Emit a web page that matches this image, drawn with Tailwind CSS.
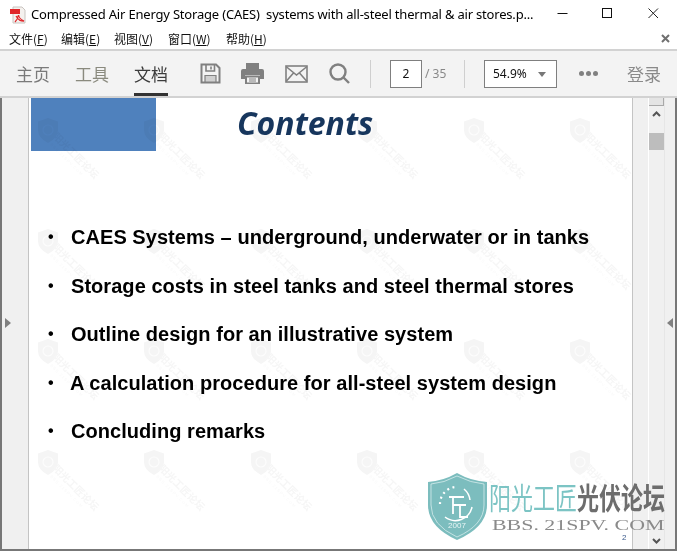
<!DOCTYPE html>
<html lang="zh">
<head>
  <meta charset="UTF-8" />
  <title>Compressed Air Energy Storage</title>
  <script src="https://cdn.jsdelivr.net/npm/@tailwindcss/browser@4"></script>
</head>
<body class="relative w-[677px] h-[551px] overflow-hidden bg-white font-['Noto_Sans_CJK_SC',sans-serif] text-black">
  <svg width="0" height="0" class="absolute">
    <defs>
      <g id="wm">
        <path d="M10 0 L20 3.500 V12 Q20 20 10 25 Q0 20 0 12 V3.500 Z" fill="#f5f5f5"/>
        <circle cx="10" cy="12" r="5" fill="none" stroke="#fcfcfc" stroke-width="1.200"/>
        <g transform="translate(19 14) rotate(45)">
          <text x="0" y="7" font-size="10" font-weight="700" fill="#f6f6f6" font-family="Noto Sans CJK SC">阳光工匠论坛</text>
          <text x="4" y="14" font-size="4" fill="#f8f8f8" font-family="Liberation Sans" letter-spacing="1">BBS.21SPV.COM</text>
        </g>
      </g>
    </defs>
  </svg>

  <!-- title bar -->
  <div class="flex items-center h-[29px] pl-[10px]">
    <svg width="16" height="18" viewBox="0 0 16 18" class="shrink-0">
      <path d="M3 1H12L15 4V17H3Z" fill="#f4f1ee" stroke="#c9c4c0"/>
      <rect x="0" y="3" width="10" height="5" fill="#e0262a"/>
      <path d="M6 10 C9 15 11 15 14 15 C10 13 9 12 8.500 9 C8 12 7 14 5 16" fill="none" stroke="#e0262a" stroke-width="1.300"/>
    </svg>
    <span class="ml-[5px] w-[510px] whitespace-pre text-[13px] tracking-[-0.19px] font-['Noto_Sans','Open_Sans',sans-serif] leading-none">Compressed Air Energy Storage (CAES)  systems with all-steel thermal &amp; air stores.p...</span>
    <svg width="11" height="11" viewBox="0 0 11 11" class="absolute left-[557px] top-[8px]"><path d="M0.500 5.500H10.500" stroke="#111"/></svg>
    <svg width="11" height="11" viewBox="0 0 11 11" class="absolute left-[602px] top-[8px]"><rect x="0.500" y="0.500" width="9" height="9" fill="none" stroke="#111"/></svg>
    <svg width="11" height="11" viewBox="0 0 11 11" class="absolute left-[648px] top-[8px]"><path d="M0.500 0.500L10 10M10 0.500L0.500 10" stroke="#222"/></svg>
  </div>

  <!-- menu bar -->
  <div class="relative flex items-center h-[20px] pl-[9px] text-[12px] leading-none text-[#111]">
    <span class="w-[52px]">文件(<u>F</u>)</span>
    <span class="w-[53px]">编辑(<u>E</u>)</span>
    <span class="w-[54px]">视图(<u>V</u>)</span>
    <span class="w-[58px]">窗口(<u>W</u>)</span>
    <span>帮助(<u>H</u>)</span>
    <svg width="9" height="9" viewBox="0 0 9 9" class="absolute right-[7px] top-[5px]"><path d="M1 1L8 8M8 1L1 8" stroke="#707070" stroke-width="2"/></svg>
  </div>

  <!-- toolbar -->
  <div class="flex items-center h-[45px] bg-[#f3f3f3] border-y-2 border-[#d2d2d2] box-content text-[#7a7a7a]">
    <div class="flex h-full items-center pl-[16px] text-[17px] leading-none">
      <span class="w-[59px]">主页</span>
      <span class="w-[59px] text-[#8a8a7e]">工具</span>
      <span class="relative flex h-full items-center w-[34px] text-[#3c3c3c]">文档
        <span class="absolute left-0 right-0 bottom-0 h-[3px] bg-[#333]"></span>
      </span>
    </div>
    <svg width="21" height="21" viewBox="0 0 21 21" class="ml-[32px]" fill="none" stroke="#808080" stroke-width="2"><path d="M1.500 1.500H16L19.500 5V19.500H1.500Z"/><path d="M6 2V8H14.500V2M11 3.500V6.500" stroke-width="1.600"/><path d="M5 12.500H16V19H5Z" fill="#d0d0d0" stroke-width="1.200"/></svg>
    <svg width="23" height="21" viewBox="0 0 23 21" class="ml-[20px]"><path d="M5 0H18V6H5Z" fill="#808080"/><path d="M2 6H21Q23 6 23 8V16H19V12H4V16H0V8Q0 6 2 6Z" fill="#808080"/><path d="M5 13.500H18V20.500H5Z" fill="#f3f3f3" stroke="#808080" stroke-width="2"/><path d="M8 16H15M8 18H15" stroke="#808080"/></svg>
    <svg width="23" height="18" viewBox="0 0 23 18" class="ml-[21px]" fill="none" stroke="#808080" stroke-width="1.600"><rect x="1" y="1" width="21" height="16"/><path d="M1 1.500L11.500 10L22 1.500M1 16.500L8.500 8M22 16.500L14.500 8"/></svg>
    <svg width="21" height="21" viewBox="0 0 21 21" class="ml-[21px]" fill="none" stroke="#808080" stroke-width="2.400"><circle cx="9" cy="9" r="7.500"/><path d="M14.500 14.500L20 20"/></svg>
    <div class="ml-[20px] w-px h-[28px] bg-[#cfcfcf]"></div>
    <div class="ml-[19px] flex items-center justify-center w-[32px] h-[28px] bg-white border border-[#7f7f7f] text-[12px] text-[#111] font-['Noto_Sans',sans-serif]">2</div>
    <span class="ml-[3px] w-[21px] text-[12px] whitespace-nowrap text-[#888] font-['Noto_Sans',sans-serif]">/ 35</span>
    <div class="ml-[18px] w-px h-[28px] bg-[#cfcfcf]"></div>
    <div class="ml-[19px] relative flex items-center pl-[8px] w-[73px] h-[28px] bg-white border border-[#7f7f7f] text-[12px] text-[#111] font-['Noto_Sans',sans-serif]">54.9%
      <span class="absolute right-[10px] top-[11px] w-0 h-0 border-x-[4px] border-x-transparent border-t-[5px] border-t-[#777]"></span>
    </div>
    <div class="ml-[22px] flex gap-[2px]">
      <span class="size-[5px] rounded-full bg-[#808080]"></span>
      <span class="size-[5px] rounded-full bg-[#808080]"></span>
      <span class="size-[5px] rounded-full bg-[#808080]"></span>
    </div>
    <span class="ml-[29px] text-[17px] leading-none text-[#8a8a8a]">登录</span>
  </div>

  <!-- document area -->
  <div class="flex h-[453px] border-b-2 border-[#777]">
    <div class="relative w-[29px] shrink-0 bg-[#f0f0f0] border-l-2 border-[#777] border-r border-r-[#c4c4c4]">
      <span class="absolute left-[3px] top-[220px] w-0 h-0 border-y-[5px] border-y-transparent border-l-[6px] border-l-[#808080]"></span>
    </div>
    <div class="relative flex-1 bg-white overflow-hidden">
      <div class="absolute left-[2px] top-0 w-[125px] h-[53px] bg-[#4f81bd]"></div>
      <svg class="absolute inset-0 mix-blend-multiply" width="603" height="451">
        <use href="#wm" x="9" y="20"/><use href="#wm" x="115" y="20"/><use href="#wm" x="222" y="20"/><use href="#wm" x="328" y="20"/><use href="#wm" x="435" y="20"/><use href="#wm" x="541" y="20"/>
        <use href="#wm" x="9" y="131"/><use href="#wm" x="115" y="131"/><use href="#wm" x="222" y="131"/><use href="#wm" x="328" y="131"/><use href="#wm" x="435" y="131"/><use href="#wm" x="541" y="131"/>
        <use href="#wm" x="9" y="241"/><use href="#wm" x="115" y="241"/><use href="#wm" x="222" y="241"/><use href="#wm" x="328" y="241"/><use href="#wm" x="435" y="241"/><use href="#wm" x="541" y="241"/>
        <use href="#wm" x="9" y="352"/><use href="#wm" x="115" y="352"/><use href="#wm" x="222" y="352"/><use href="#wm" x="328" y="352"/><use href="#wm" x="435" y="352"/><use href="#wm" x="541" y="352"/>
      </svg>
      <div class="relative pt-[5px] pl-[208px] text-[32px] leading-[40px] font-bold italic text-[#17365d] font-['Open_Sans',sans-serif]">Contents</div>
      <ul class="relative mt-[82px] pl-[17px] text-[20px] tracking-[0.05px] leading-[24px] font-bold text-black font-['Liberation_Sans',sans-serif]">
        <li class="flex h-[48.500px]"><span class="w-[25px] pl-[2px] text-[16px]">•</span>CAES Systems – underground, underwater or in tanks</li>
        <li class="flex h-[48.500px]"><span class="w-[25px] pl-[2px] text-[16px]">•</span>Storage costs in steel tanks and steel thermal stores</li>
        <li class="flex h-[48.500px]"><span class="w-[25px] pl-[2px] text-[16px]">•</span>Outline design for an illustrative system</li>
        <li class="flex h-[48.500px]"><span class="w-[24px] pl-[2px] text-[16px]">•</span>A calculation procedure for all-steel system design</li>
        <li class="flex h-[48.500px]"><span class="w-[25px] pl-[2px] text-[16px]">•</span>Concluding remarks</li>
      </ul>
      <span class="absolute left-[593px] top-[436px] text-[8px] leading-none text-[#3b5a8c] font-['Liberation_Sans',sans-serif]">2</span>
    </div>
    <!-- right rail -->
    <div class="relative w-[45px] shrink-0 bg-[#f0f0f0] border-l border-[#c4c4c4] border-r-2 border-r-[#777]">
      <div class="absolute left-[15px] top-0 w-[17px] h-full bg-[#f0f0f0] border-l border-l-white border-r border-r-[#e6e6e6]">
        <div class="h-[8px] bg-[#e4e4e4] border-b border-r border-[#a9a9a9]"></div>
        <svg width="9" height="6" viewBox="0 0 9 6" class="absolute left-[3px] top-[13px]"><path d="M1 5L4.500 1.500L8 5" fill="none" stroke="#555" stroke-width="2"/></svg>
        <div class="absolute left-0 top-[35px] w-[15px] h-[17px] bg-[#bdbdbd]"></div>
        <svg width="9" height="6" viewBox="0 0 9 6" class="absolute left-[3px] top-[440px]"><path d="M1 1L4.500 4.500L8 1" fill="none" stroke="#555" stroke-width="2"/></svg>
      </div>
      <span class="absolute left-[34px] top-[220px] w-0 h-0 border-y-[5px] border-y-transparent border-r-[6px] border-r-[#808080]"></span>
    </div>
  </div>

  <!-- forum logo stamped over the window -->
  <div class="absolute left-[428px] top-[473px] flex">
    <svg width="60" height="68" viewBox="0 0 60 68">
      <path d="M29 0 Q43 8 59 9 V32 Q59 54 29 67 Q0 54 0 32 V9 Q15 8 29 0Z" fill="#7cbdbe"/>
      <path d="M29 3 Q43 10 56 11 V32 Q56 52 29 64 Q3 52 3 32 V11 Q16 10 29 3Z" fill="none" stroke="#d5ecec" stroke-width="0.800"/>
      <path d="M12 31A17 17 0 0 1 27 14" fill="none" stroke="#fff" stroke-width="2.200" stroke-dasharray="2 3.500"/>
      <path d="M36 16A17 17 0 0 1 42 27M44 34A17 17 0 0 1 17 44" fill="none" stroke="#fff" stroke-width="1.500"/>
      <path d="M21 24H36M25 24V41M25 32H38M32 32V44H40" fill="none" stroke="#fff" stroke-width="1.800"/>
      <text x="29" y="55" text-anchor="middle" font-size="8" fill="#e8f5f5" font-family="Liberation Sans">2007</text>
    </svg>
    <div class="ml-[1px] w-[176px] flex flex-col">
      <div class="flex mt-[6px] origin-top scale-y-[1.35] text-[22px] leading-[24px] whitespace-nowrap font-bold">
        <span class="text-[#7cc4c4] font-normal">阳光工匠</span><span class="text-[#6d6d6d]">光伏论坛</span>
      </div>
      <div class="self-start mt-[16px] ml-[3px] origin-left scale-x-[1.46] text-[15px] leading-[12px] whitespace-nowrap text-[#8a8a8a] font-['Liberation_Serif',serif]">BBS. 21SPV. COM</div>
    </div>
  </div>
</body>
</html>
